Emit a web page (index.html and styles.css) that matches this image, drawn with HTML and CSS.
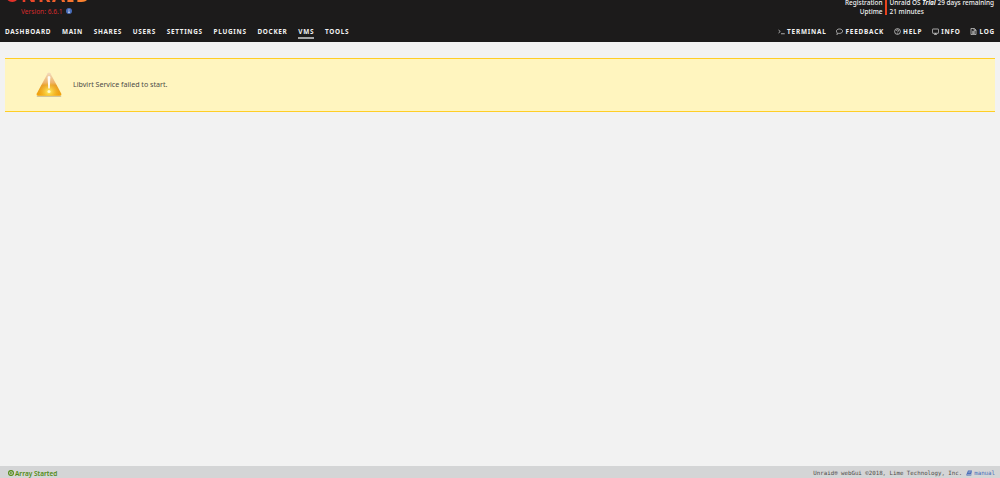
FILE: index.html
```
<!DOCTYPE html>
<html lang="en">
<head>
    <meta charset="UTF-8">
    <meta name="viewport" content="width=device-width, initial-scale=1.0">
    <title>Tower/VMs</title>
    <link rel="stylesheet" href="styles.css">
</head>
<body>
    <header class="header">
        <div class="top">
            <div class="brand">
                <div class="logo">UNRAID</div>
                <div class="version">
                    <span>Version: 6.6.1</span>
                    <svg class="info-icon" viewBox="0 0 12 12">
                        <circle cx="6" cy="6" r="6" fill="#486dba"/>
                        <path d="M5 2h2v1.700H5zM4.200 5H7v3.700h1V10H4V8.700h1V6.200H4.200z" fill="#b9c6e4"/>
                    </svg>
                </div>
            </div>
            <div class="server">
                <div class="server-labels">
                    <div>Registration</div>
                    <div>Uptime</div>
                </div>
                <div class="server-values">
                    <div>Unraid OS <em>Trial</em> 29 days remaining</div>
                    <div>21 minutes</div>
                </div>
            </div>
        </div>
        <nav class="menu">
            <div class="menu-left">
                <a>DASHBOARD</a>
                <a>MAIN</a>
                <a>SHARES</a>
                <a>USERS</a>
                <a>SETTINGS</a>
                <a>PLUGINS</a>
                <a>DOCKER</a>
                <a class="active">VMS</a>
                <a>TOOLS</a>
            </div>
            <div class="menu-right">
                <a>
                    <svg viewBox="0 0 14 14"><path d="M1 4l3.500 3L1 10M6 11.500h7.500"/></svg>
                    <span>TERMINAL</span>
                </a>
                <a>
                    <svg viewBox="0 0 14 14"><path d="M7 2c3.500 0 6.200 1.900 6.200 4.400S10.500 10.800 7 10.800c-.7 0-1.200 0-1.800-.2C4.300 11.600 3 12.500 1.500 12.700c.7-.8 1.200-1.700 1.300-2.800C1.500 9.100.8 7.800.8 6.400.8 3.900 3.500 2 7 2z"/></svg>
                    <span>FEEDBACK</span>
                </a>
                <a>
                    <svg viewBox="0 0 14 14"><circle cx="7" cy="7" r="5.800"/><path d="M4.800 5.500c.2-2.600 4.500-2.400 4.400 0C9.200 6.900 7 6.900 7 8.500M7 9.700v1.500"/></svg>
                    <span>HELP</span>
                </a>
                <a>
                    <svg viewBox="0 0 14 14"><rect x=".8" y="2" width="12.400" height="8.500" rx="1"/><path d="M4 12.700h6M7 10.500v2"/></svg>
                    <span>INFO</span>
                </a>
                <a>
                    <svg viewBox="0 0 14 14"><path d="M2 .8h6.500L12 4.300v8.900H2zM8.200 1v3.600H12M4.300 6.600h5.400M4.300 8.700h5.400M4.300 10.800h5.400"/></svg>
                    <span>LOG</span>
                </a>
            </div>
        </nav>
    </header>

    <main class="content">
        <div class="notice">
            <svg class="warning-icon" viewBox="0 0 28 27">
                <defs>
                    <linearGradient id="amber" x1="0" y1="0" x2="0" y2="1">
                        <stop offset="0" stop-color="#f3dcc0"/>
                        <stop offset=".45" stop-color="#eeb266"/>
                        <stop offset=".55" stop-color="#e59a28"/>
                        <stop offset="1" stop-color="#f3a50c"/>
                    </linearGradient>
                    <radialGradient id="glow" cx=".5" cy=".82" r=".42">
                        <stop offset="0" stop-color="#fff26a"/>
                        <stop offset="1" stop-color="#fbc52c" stop-opacity="0"/>
                    </radialGradient>
                </defs>
                <path d="M2.500 25.300h23" stroke="#cfc49c" stroke-width="1.600" stroke-linecap="round"/>
                <path d="M12.700 2.300q1.300-1.500 2.600 0L26.200 22.500q.8 2.200-1.500 2.200H3.300Q1 24.700 1.800 22.500z" fill="url(#amber)"/>
                <path d="M12.700 2.300q1.300-1.500 2.600 0L26.200 22.500q.8 2.200-1.500 2.200H3.300Q1 24.700 1.800 22.500z" fill="url(#glow)"/>
                <path d="M12.600 6q1.400-2 2.800 0l-.7 11.500h-1.400z" fill="#fffdf5"/>
                <circle cx="14" cy="20.500" r="1.500" fill="#fffbd0"/>
            </svg>
            <span>Libvirt Service failed to start.</span>
        </div>
    </main>

    <footer class="footer">
        <div class="array-status">
            <svg viewBox="0 0 12 12"><circle cx="6" cy="6" r="4.800" fill="none" stroke="#4f8a10" stroke-width="2.200"/><path d="M4.500 3.300L9 6 4.500 8.700z" fill="#4f8a10"/></svg>
            <span>Array Started</span>
        </div>
        <div class="copyright">
            <span>Unraid® webGui ©2018, Lime Technology, Inc.</span>
            <a class="manual">
                <svg viewBox="0 0 12 12"><path d="M4 1h8L9.700 9H2.500q-1 .9.200 1.300h7.200L11.700 4l.3.500L10.200 11.500H2Q.2 11 .8 9z" fill="#486dba"/><path d="M5 3.200h4.500M4.400 5.200h4.500" stroke="#d5d7d9" stroke-width=".8"/></svg>
                <span>manual</span>
            </a>
        </div>
    </footer>
</body>
</html>
```
FILE: styles.css
```
* {
    box-sizing: border-box;
}
body {
    display: flex;
    flex-direction: column;
    height: 100vh;
    margin: 0;
    overflow: hidden;
    background-color: #f2f2f2;
    color: #4d4b47;
    font-family: "Noto Sans", sans-serif;
    font-size: 6.5px;
}
.header {
    height: 42px;
    background-color: #1c1b1b;
    color: #f2f2f2;
}
.top {
    display: flex;
    justify-content: space-between;
    height: 24px;
    padding: 0 6px 0 5px;
    overflow: hidden;
}
.brand {
    width: 86px;
}
.logo {
    height: 20px;
    margin-top: -15px;
    font-size: 19px;
    font-weight: 700;
    line-height: 20px;
    letter-spacing: 1.6px;
    color: transparent;
    background: linear-gradient(90deg, #e22828, #ff8c2f);
    -webkit-background-clip: text;
    background-clip: text;
}
.version {
    display: flex;
    align-items: center;
    gap: 3px;
    height: 12px;
    padding-left: 16px;
    color: #d42a2b;
    font-size: 6.6px;
    white-space: nowrap;
}
.info-icon {
    width: 6px;
    height: 6px;
}
.server {
    display: flex;
    height: 15px;
    font-size: 6.44px;
    line-height: 9px;
    font-weight: 500;
    white-space: nowrap;
}
.server > div {
    margin-top: -2px;
}
.server-labels {
    padding-right: 2px;
    text-align: right;
}
.server-values {
    padding-left: 3px;
    border-left: 2px solid #e8431f;
}
.server em {
    font-weight: 700;
}
.menu {
    display: flex;
    justify-content: space-between;
    padding: 0 5px;
    font-size: 6.4px;
    font-weight: 700;
    line-height: 9px;
    letter-spacing: 0.7px;
}
.menu-left,
.menu-right {
    display: flex;
}
.menu a {
    padding-top: 3px;
}
.menu-left {
    gap: 10.8px;
}
.menu-right {
    gap: 9.5px;
    letter-spacing: 0.8px;
}
.menu .active {
    height: 15px;
    border-bottom: 2px solid #a5a5a5;
}
.menu-right a {
    display: flex;
    align-items: flex-start;
    gap: 2.4px;
}
.menu-right svg {
    width: 7px;
    height: 7px;
    margin-top: 1px;
    fill: none;
    stroke: #d8d8d8;
    stroke-width: 1.5;
}
.content {
    flex: 1;
    padding: 16px 5px;
}
.notice {
    display: flex;
    align-items: center;
    gap: 10px;
    height: 54px;
    padding: 0 0 2px 30px;
    background-color: #fff5bf;
    border-top: 1px solid #ffce26;
    border-bottom: 1px solid #ffce26;
    font-size: 7.1px;
}
.warning-icon {
    width: 28px;
    height: 27px;
}
.footer {
    display: flex;
    justify-content: space-between;
    align-items: center;
    height: 12px;
    padding: 2px 5px 0 8px;
    background-color: #d4d5d6;
}
.array-status {
    display: flex;
    align-items: center;
    gap: 1px;
    color: #4f8a10;
    font-weight: 600;
}
.footer svg {
    width: 6px;
    height: 6px;
}
.copyright {
    display: flex;
    gap: 4px;
    font-family: "DejaVu Sans Mono", monospace;
    font-size: 5.75px;
}
.manual {
    display: flex;
    align-items: center;
    gap: 2px;
    color: #486dba;
}
```
